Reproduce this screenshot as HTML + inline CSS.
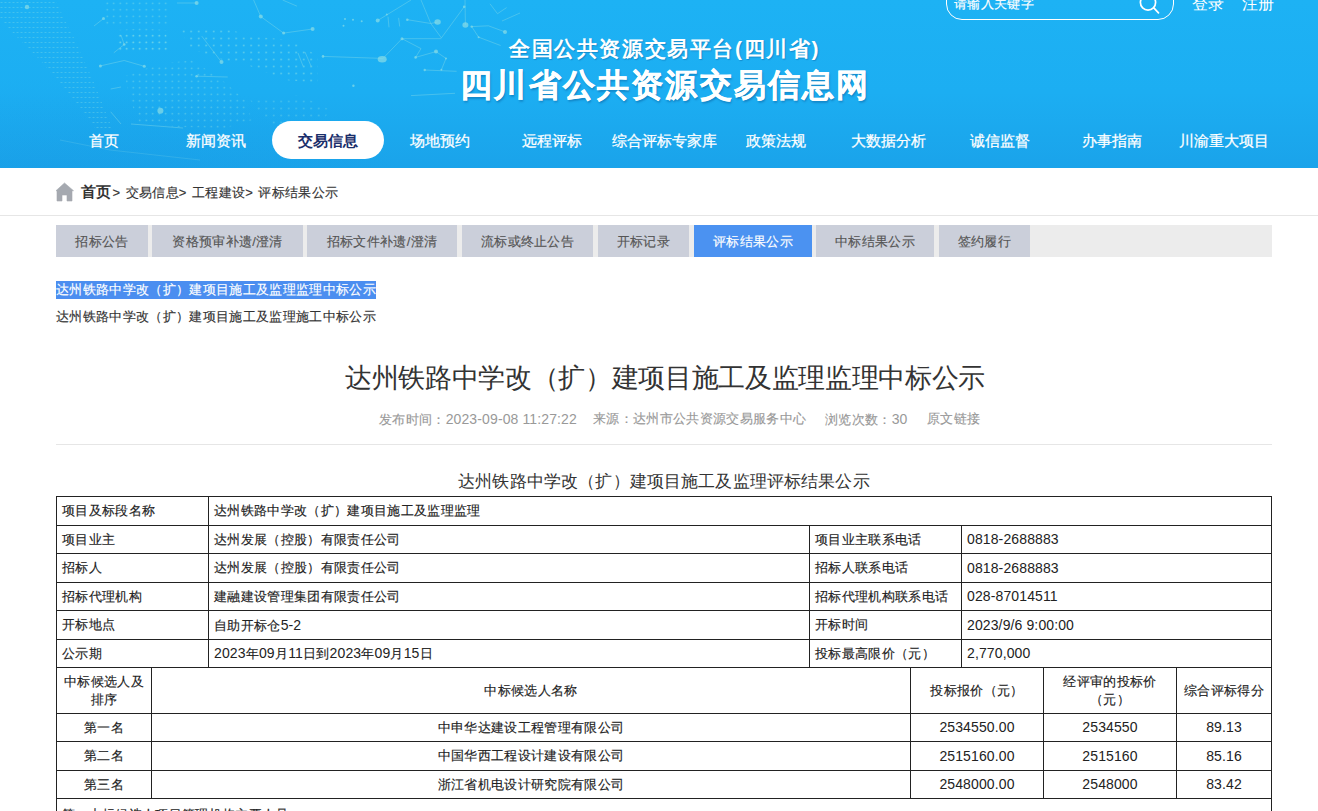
<!DOCTYPE html>
<html><head><meta charset="utf-8">
<style>
*{margin:0;padding:0;box-sizing:border-box}
html,body{width:1318px;height:811px;overflow:hidden;background:#fff}
body{font-family:"Liberation Sans",sans-serif;position:relative;color:#333}
.a{position:absolute;white-space:nowrap}
.t13{font-size:13px;letter-spacing:0.33px;-webkit-text-stroke-width:0.15px}
#hdr{position:absolute;left:0;top:0;width:1318px;height:168px;background:linear-gradient(180deg,#1db2f4 0%,#1caef2 55%,#1aa3ea 100%);overflow:hidden}
.nav{position:absolute;top:121px;width:112px;height:38px;line-height:39px;text-align:center;color:#fff;font-size:15px;-webkit-text-stroke:0.25px #fff}
.nav.on{background:#fff;border-radius:19px;color:#1b2f6b;font-weight:bold;-webkit-text-stroke:0}
#tabs{position:absolute;left:56px;top:225px;width:1216px;height:32px;background:#ececec}
.tab{position:absolute;top:0;height:32px;line-height:34px;text-align:center;background:#cbcfda;color:#555;font-size:13px;letter-spacing:0.33px;-webkit-text-stroke-width:0.15px}
.tab.on{background:#4b92f1;color:#fff}
.ln{position:absolute;background:#222}
.tc{position:absolute;white-space:nowrap;font-size:13px;letter-spacing:0.33px;color:#222;-webkit-text-stroke:0.15px #222}
.d{font-size:14px;letter-spacing:0.12px;-webkit-text-stroke:0}
.gt{letter-spacing:0.9px}
</style></head><body>
<div id="hdr">
<svg class="a" style="left:0;top:0" width="1318" height="168" viewBox="0 0 1318 168">
<defs>
<pattern id="dp" width="6.5" height="6.5" patternUnits="userSpaceOnUse"><circle cx="3.25" cy="3.25" r="0.8" fill="#8fe3e3" fill-opacity="0.55"/></pattern>
<pattern id="dps" width="7.5" height="7" patternUnits="userSpaceOnUse"><circle cx="3.7" cy="3.5" r="0.95" fill="#8fe3e3" fill-opacity="0.5"/></pattern>
<pattern id="dh" width="4" height="5" patternUnits="userSpaceOnUse"><rect x="0.5" y="2" width="2" height="0.9" fill="#8fe3e3" fill-opacity="0.45"/></pattern>
<radialGradient id="shade" cx="0.3" cy="1" r="0.7"><stop offset="0" stop-color="#1690dc" stop-opacity="0.15"/><stop offset="1" stop-color="#1690dc" stop-opacity="0"/></radialGradient>
</defs>
<rect x="-100" y="40" width="500" height="128" fill="url(#shade)"/>
<path d="M0,0 L55,0 L75,40 L95,85 L112,128 L95,128 L70,95 L40,60 L10,30 L0,18 Z" fill="url(#dh)" opacity="0.8"/>

<path d="M125,76 L160,64 L192,60 L222,80 L245,100 L252,120 L225,128 L180,127 L140,124 L130,100 Z" fill="url(#dp)"/>
<path d="M102,0 L170,0 L168,27 L150,28 L118,30 L117,52 L169,52 L165,30 L104,26 Z" fill="url(#dp)"/>
<path d="M117,31 L168,30 L170,52 L117,52 Z" fill="url(#dp)"/>
<path d="M250,100 L300,95 L330,110 L320,125 L270,125 Z" fill="url(#dps)" opacity="0.6"/>
<path d="M179,27 L222,27 L250,36 L290,40 L318,56 L318,83 L285,80 L250,66 L215,58 L190,48 Z" fill="url(#dps)"/>

<g stroke="#8adde6" stroke-opacity="0.5" stroke-width="0.8" fill="none">
<polyline points="94,26 103.5,18.6"/>
<polyline points="113.8,52.8 124.2,44.5 121,35.2"/>
<polyline points="100.4,65.9 124.2,60.5 144.3,66.3"/>
<polyline points="177,3 196.6,3"/>
<polyline points="201.8,36.2 221.5,62.1"/>
<polyline points="196.6,76.2 227.7,77"/>
<polyline points="253.6,0 260.8,16.6 283.6,33.1 312.6,29"/>
<polyline points="282.6,0 297,6.2"/>
<polyline points="298,53 303,66"/><polyline points="305,52 311,66"/>
<polyline points="110.7,111.8 121,124"/><polyline points="110.7,89 121,87"/>
<polyline points="131,124 183,128"/>
<polyline points="377.7,20.5 411,0"/>
<polyline points="388,16.7 389,27.3"/><polyline points="398.6,17.9 399.7,26.5"/>
<polyline points="407.3,19.7 430.8,23.5 437.6,22"/>
<polyline points="421,0 430.8,23.5 441.4,37.9 464.2,6.8"/>
<polyline points="465,0 465.4,25"/>
<polyline points="402,38.7 441.4,38.7"/>
<polyline points="402,38.7 382.2,59.2"/>
<polyline points="323,56.4 382.2,58.4"/>
<polyline points="402,38.7 421,48.6 415.6,57.4 436,51.6 446,58.4 441.4,69.8"/>
<polyline points="424.7,70 456.6,71.3"/>
<polyline points="411,95.6 455,93.3"/>
<polyline points="471.7,26.6 478.6,37.2 500.6,45.5"/>
<polyline points="471.7,26.6 488.4,25.8 505,31.9"/>
<polyline points="490,3.8 497.5,13.7 506.6,7.6"/>
<polyline points="502,21 520,13"/>
<polyline points="60,140 110,150 200,160" stroke-opacity="0.25"/>
</g>
<g fill="#8adde6" fill-opacity="0.7">
<circle cx="103.5" cy="18.6" r="1.5"/><circle cx="124.2" cy="44.5" r="1.3"/><circle cx="100.4" cy="65.9" r="1.5"/><circle cx="144.3" cy="66.3" r="1.5"/>
<circle cx="196.6" cy="3" r="2"/><circle cx="221.5" cy="62.1" r="2"/><circle cx="196.6" cy="76.2" r="1.3"/>
<circle cx="260.8" cy="16.6" r="2"/><circle cx="283.6" cy="33.1" r="1.5"/><circle cx="312.6" cy="29" r="2"/>
<circle cx="160.4" cy="110.8" r="3"/><circle cx="27" cy="7" r="2.2"/>
<circle cx="377.7" cy="20.5" r="2"/><circle cx="386.8" cy="14.4" r="1"/>
<circle cx="345" cy="19" r="1"/><circle cx="353" cy="19.7" r="1"/><circle cx="361.7" cy="21.2" r="1"/><circle cx="343.5" cy="25.8" r="1"/>
<circle cx="407.3" cy="19.7" r="1.3"/><ellipse cx="437.6" cy="22" rx="3.2" ry="2.8"/>
<circle cx="464.2" cy="6.8" r="1.3"/><ellipse cx="465.4" cy="25" rx="3" ry="2.8"/>
<circle cx="402" cy="38.7" r="1.5"/><ellipse cx="382.2" cy="59.2" rx="4.5" ry="3.3"/>
<circle cx="323" cy="56.4" r="1.3"/><circle cx="415.6" cy="57.4" r="1.3"/><circle cx="436" cy="51.6" r="2"/>
<circle cx="446" cy="58.4" r="1"/><circle cx="441.4" cy="69.8" r="1"/><circle cx="424.7" cy="70" r="1.2"/>
<circle cx="471.7" cy="26.6" r="1.2"/><circle cx="478.6" cy="37.2" r="1"/><circle cx="505" cy="31.9" r="2"/>
<circle cx="353.4" cy="85.7" r="1.2"/>
</g>
</svg>

</div>
<div class="a" style="left:946px;top:-19px;width:228px;height:39px;border:1px solid #fff;border-radius:16px"></div>
<div class="a t13" style="left:954px;top:-5px;line-height:18px;color:#fff">请输入关键字</div>
<svg class="a" style="left:1138px;top:-6px" width="24" height="22" viewBox="0 0 24 22"><circle cx="10" cy="8.5" r="7.6" fill="none" stroke="#fff" stroke-width="1.7"/><line x1="15.8" y1="13.8" x2="20.5" y2="18.8" stroke="#fff" stroke-width="1.7" stroke-linecap="round"/></svg>
<div class="a" style="left:1192px;top:-6px;font-size:16px;line-height:20px;color:#fff">登录</div>
<div class="a" style="left:1242px;top:-6px;font-size:16px;line-height:20px;color:#fff">注册</div>

<div class="a" style="left:491px;top:35px;width:347px;text-align:center;font-size:21px;letter-spacing:1.6px;line-height:28px;font-weight:bold;color:#fff;text-shadow:1px 1px 1px rgba(0,60,120,.3)">全国公共资源交易平台(四川省)</div>
<div class="a" style="left:441px;top:64px;width:449px;text-align:center;font-size:32px;letter-spacing:2.2px;line-height:42px;font-weight:bold;color:#fff;-webkit-text-stroke:0.4px #fff;text-shadow:1px 2px 2px rgba(0,60,120,.35)">四川省公共资源交易信息网</div>

<div class="nav" style="left:48px">首页</div>
<div class="nav" style="left:160px">新闻资讯</div>
<div class="nav on" style="left:272px">交易信息</div>
<div class="nav" style="left:384px">场地预约</div>
<div class="nav" style="left:496px">远程评标</div>
<div class="nav" style="left:608px">综合评标专家库</div>
<div class="nav" style="left:720px">政策法规</div>
<div class="nav" style="left:832px">大数据分析</div>
<div class="nav" style="left:944px">诚信监督</div>
<div class="nav" style="left:1056px">办事指南</div>
<div class="nav" style="left:1168px">川渝重大项目</div>

<svg class="a" style="left:56px;top:182px" width="19" height="20" viewBox="0 0 19 20"><path d="M8.5 1 L0 8.7 L1 8.7 L1 19 L6 19 L6 13 L11 13 L11 19 L16 19 L16 8.7 L17.5 8.7 Z" fill="#a5a9b0" stroke="#a5a9b0" stroke-width="0.6" stroke-linejoin="round"/></svg>
<div class="a" style="left:81px;top:182px;font-size:15px;line-height:20px;color:#333"><b>首页</b><span class="t13"><span class="gt" style="margin-left:1.5px">&gt; </span>交易信息<span class="gt">&gt; </span>工程建设<span class="gt">&gt; </span>评标结果公示</span></div>
<div class="a" style="left:0;top:215px;width:1318px;height:1px;background:#e6e6e6"></div>

<div id="tabs">
<div class="tab" style="left:0;width:92px">招标公告</div>
<div class="tab" style="left:96px;width:151px">资格预审补遗/澄清</div>
<div class="tab" style="left:251px;width:150px">招标文件补遗/澄清</div>
<div class="tab" style="left:406px;width:131px">流标或终止公告</div>
<div class="tab" style="left:542px;width:91px">开标记录</div>
<div class="tab on" style="left:638px;width:118px">评标结果公示</div>
<div class="tab" style="left:760px;width:118px">中标结果公示</div>
<div class="tab" style="left:883px;width:91px">签约履行</div>
</div>

<div class="a t13" style="left:56px;top:281px;width:320px;height:18px;line-height:18px;background:#4b8ef0;color:#fff">达州铁路中学改（扩）建项目施工及监理监理中标公示</div>
<div class="a t13" style="left:56px;top:308px;line-height:18px;color:#333">达州铁路中学改（扩）建项目施工及监理施工中标公示</div>

<div class="a" style="left:325px;top:360px;width:680px;text-align:center;font-size:27px;letter-spacing:-0.33px;line-height:36px;color:#333">达州铁路中学改（扩）建项目施工及监理监理中标公示</div>
<div class="a t13" style="left:379px;top:410px;line-height:18px;color:#999">发布时间：<span class="d">2023-09-08 11:27:22</span></div>
<div class="a t13" style="left:593px;top:410px;line-height:18px;color:#999">来源：达州市公共资源交易服务中心</div>
<div class="a t13" style="left:825px;top:410px;line-height:18px;color:#999">浏览次数：<span class="d">30</span></div>
<div class="a t13" style="left:927px;top:410px;line-height:18px;color:#999">原文链接</div>
<div class="a" style="left:56px;top:444px;width:1216px;height:1px;background:#e6e6e6"></div>

<div class="a" style="left:414px;top:470px;width:500px;text-align:center;font-size:17px;letter-spacing:0.15px;line-height:24px;color:#333">达州铁路中学改（扩）建项目施工及监理评标结果公示</div>

<div class="ln" style="left:56px;top:496px;width:1216px;height:1px"></div>
<div class="ln" style="left:56px;top:525px;width:1216px;height:1px"></div>
<div class="ln" style="left:56px;top:553px;width:1216px;height:1px"></div>
<div class="ln" style="left:56px;top:582px;width:1216px;height:1px"></div>
<div class="ln" style="left:56px;top:610px;width:1216px;height:1px"></div>
<div class="ln" style="left:56px;top:639px;width:1216px;height:1px"></div>
<div class="ln" style="left:56px;top:667px;width:1216px;height:1px"></div>
<div class="ln" style="left:56px;top:713px;width:1216px;height:1px"></div>
<div class="ln" style="left:56px;top:741px;width:1216px;height:1px"></div>
<div class="ln" style="left:56px;top:770px;width:1216px;height:1px"></div>
<div class="ln" style="left:56px;top:798px;width:1216px;height:1px"></div>
<div class="ln" style="left:56px;top:496px;width:1px;height:316px"></div>
<div class="ln" style="left:1271px;top:496px;width:1px;height:316px"></div>
<div class="ln" style="left:208px;top:496px;width:1px;height:172px"></div>
<div class="ln" style="left:809px;top:525px;width:1px;height:143px"></div>
<div class="ln" style="left:961px;top:525px;width:1px;height:143px"></div>
<div class="ln" style="left:151px;top:667px;width:1px;height:132px"></div>
<div class="ln" style="left:910px;top:667px;width:1px;height:132px"></div>
<div class="ln" style="left:1043px;top:667px;width:1px;height:132px"></div>
<div class="ln" style="left:1176px;top:667px;width:1px;height:132px"></div>
<div class="tc" style="left:62px;top:497px;height:28px;line-height:28px">项目及标段名称</div>
<div class="tc" style="left:214px;top:497px;height:28px;line-height:28px">达州铁路中学改（扩）建项目施工及监理监理</div>
<div class="tc" style="left:62px;top:526px;height:27px;line-height:27px">项目业主</div>
<div class="tc" style="left:214px;top:526px;height:27px;line-height:27px">达州发展（控股）有限责任公司</div>
<div class="tc" style="left:815px;top:526px;height:27px;line-height:27px">项目业主联系电话</div>
<div class="tc" style="left:967px;top:526px;height:27px;line-height:27px"><span class="d">0818-2688883</span></div>
<div class="tc" style="left:62px;top:554px;height:28px;line-height:28px">招标人</div>
<div class="tc" style="left:214px;top:554px;height:28px;line-height:28px">达州发展（控股）有限责任公司</div>
<div class="tc" style="left:815px;top:554px;height:28px;line-height:28px">招标人联系电话</div>
<div class="tc" style="left:967px;top:554px;height:28px;line-height:28px"><span class="d">0818-2688883</span></div>
<div class="tc" style="left:62px;top:583px;height:27px;line-height:27px">招标代理机构</div>
<div class="tc" style="left:214px;top:583px;height:27px;line-height:27px">建融建设管理集团有限责任公司</div>
<div class="tc" style="left:815px;top:583px;height:27px;line-height:27px">招标代理机构联系电话</div>
<div class="tc" style="left:967px;top:583px;height:27px;line-height:27px"><span class="d">028-87014511</span></div>
<div class="tc" style="left:62px;top:611px;height:28px;line-height:28px">开标地点</div>
<div class="tc" style="left:214px;top:611px;height:28px;line-height:28px">自助开标仓<span class="d">5-2</span></div>
<div class="tc" style="left:815px;top:611px;height:28px;line-height:28px">开标时间</div>
<div class="tc" style="left:967px;top:611px;height:28px;line-height:28px"><span class="d">2023/9/6 9:00:00</span></div>
<div class="tc" style="left:62px;top:640px;height:27px;line-height:27px">公示期</div>
<div class="tc" style="left:214px;top:640px;height:27px;line-height:27px"><span class="d">2023</span>年<span class="d">09</span>月<span class="d">11</span>日到<span class="d">2023</span>年<span class="d">09</span>月<span class="d">15</span>日</div>
<div class="tc" style="left:815px;top:640px;height:27px;line-height:27px">投标最高限价（元）</div>
<div class="tc" style="left:967px;top:640px;height:27px;line-height:27px"><span class="d">2,770,000</span></div>
<div class="tc" style="left:57px;top:668px;width:94px;height:45px;text-align:center;line-height:17.6px;padding-top:5px;white-space:normal">中标候选人及<br>排序</div>
<div class="tc" style="left:152px;top:668px;width:758px;height:45px;line-height:45px;text-align:center">中标候选人名称</div>
<div class="tc" style="left:911px;top:668px;width:132px;height:45px;line-height:45px;text-align:center">投标报价（元）</div>
<div class="tc" style="left:1044px;top:668px;width:132px;height:45px;text-align:center;line-height:17.6px;padding-top:5px;white-space:normal">经评审的投标价<br>（元）</div>
<div class="tc" style="left:1177px;top:668px;width:94px;height:45px;line-height:45px;text-align:center">综合评标得分</div>
<div class="tc" style="left:57px;top:714px;width:94px;height:27px;line-height:27px;text-align:center">第一名</div>
<div class="tc" style="left:152px;top:714px;width:758px;height:27px;line-height:27px;text-align:center">中申华达建设工程管理有限公司</div>
<div class="tc" style="left:911px;top:714px;width:132px;height:27px;line-height:27px;text-align:center"><span class="d">2534550.00</span></div>
<div class="tc" style="left:1044px;top:714px;width:132px;height:27px;line-height:27px;text-align:center"><span class="d">2534550</span></div>
<div class="tc" style="left:1177px;top:714px;width:94px;height:27px;line-height:27px;text-align:center"><span class="d">89.13</span></div>
<div class="tc" style="left:57px;top:742px;width:94px;height:28px;line-height:28px;text-align:center">第二名</div>
<div class="tc" style="left:152px;top:742px;width:758px;height:28px;line-height:28px;text-align:center">中国华西工程设计建设有限公司</div>
<div class="tc" style="left:911px;top:742px;width:132px;height:28px;line-height:28px;text-align:center"><span class="d">2515160.00</span></div>
<div class="tc" style="left:1044px;top:742px;width:132px;height:28px;line-height:28px;text-align:center"><span class="d">2515160</span></div>
<div class="tc" style="left:1177px;top:742px;width:94px;height:28px;line-height:28px;text-align:center"><span class="d">85.16</span></div>
<div class="tc" style="left:57px;top:771px;width:94px;height:27px;line-height:27px;text-align:center">第三名</div>
<div class="tc" style="left:152px;top:771px;width:758px;height:27px;line-height:27px;text-align:center">浙江省机电设计研究院有限公司</div>
<div class="tc" style="left:911px;top:771px;width:132px;height:27px;line-height:27px;text-align:center"><span class="d">2548000.00</span></div>
<div class="tc" style="left:1044px;top:771px;width:132px;height:27px;line-height:27px;text-align:center"><span class="d">2548000</span></div>
<div class="tc" style="left:1177px;top:771px;width:94px;height:27px;line-height:27px;text-align:center"><span class="d">83.42</span></div>
<div class="tc" style="left:62px;top:801px;height:28px;line-height:28px">第一中标候选人项目管理机构主要人员</div>

</body></html>
